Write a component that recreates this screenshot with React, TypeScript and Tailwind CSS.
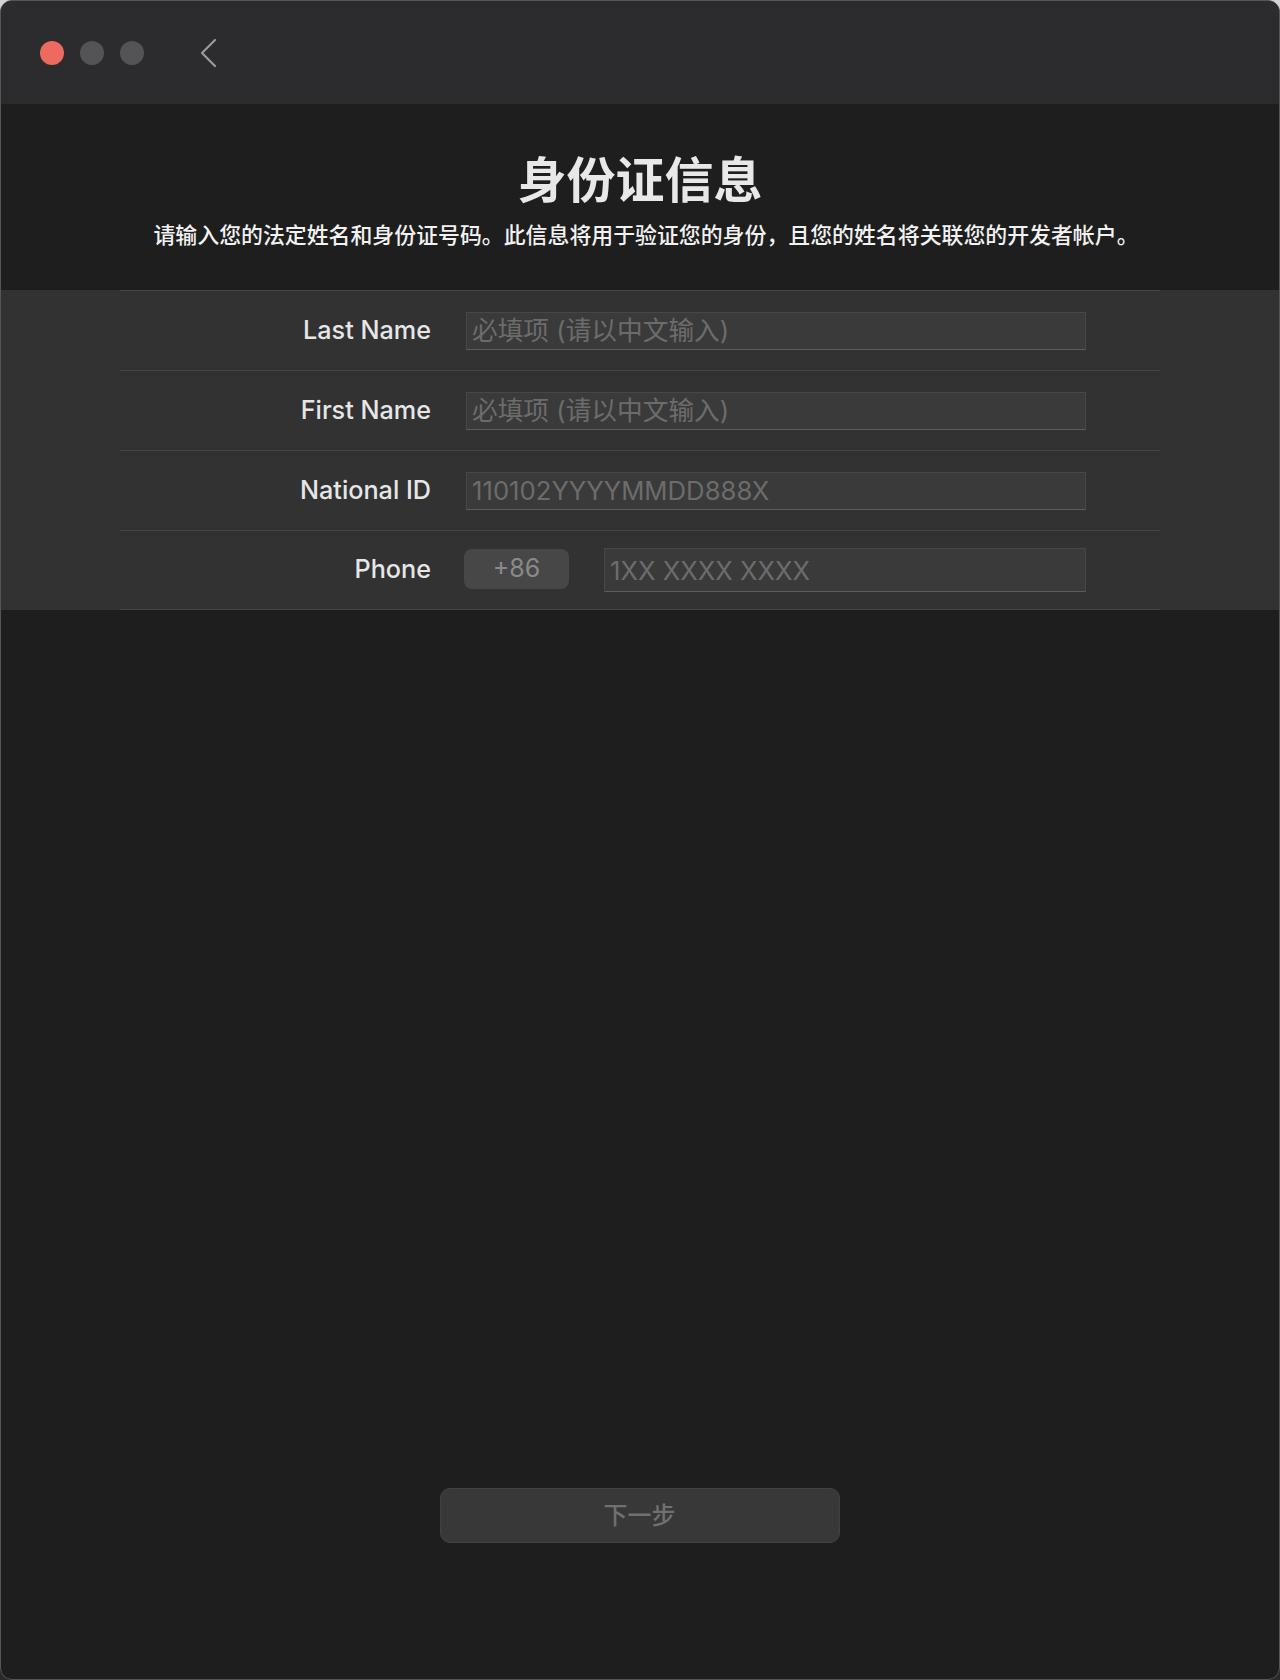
import React from "react";

const Row = ({ label, children, last }: { label: string; children: React.ReactNode; last?: boolean }) => (
  <div
    className={`flex items-center h-[80px] border-t border-[#464646] ${last ? "border-b" : ""}`}
  >
    <div className="w-[311px] text-right text-[25.2px] font-medium text-[#e6e6e6] font-['Inter','Noto_Sans_CJK_SC',sans-serif] leading-none">
      {label}
    </div>
    <div className="ml-[35px] flex items-center">{children}</div>
  </div>
);

const Field = ({ placeholder, w, h }: { placeholder: string; w: string; h: string }) => (
  <input
    readOnly
    placeholder={placeholder}
    className={`${w} ${h} bg-[#3a3a3a] border border-[#474747] border-b-[#5c5c5c] px-[5px] text-[25.7px] leading-none text-[#dcdcdc] placeholder:text-[#6c6c6c] font-['Inter','Noto_Sans_CJK_SC',sans-serif] outline-none`}
  />
);

export default function App() {
  return (
    <div className="w-[1280px] h-[1680px] bg-gradient-to-b from-[#d4d4d4] to-[#2a2a2a]">
      <div className="w-full h-full rounded-[12px] border border-[#565656] bg-[#1e1e1e] overflow-hidden flex flex-col">
        {/* title bar */}
        <div className="h-[103px] shrink-0 bg-[#2c2c2e] flex items-center pl-[39px]">
          <div className="flex items-center gap-[16px]">
            <div className="w-[24px] h-[24px] rounded-full bg-[#ec6a5e]" />
            <div className="w-[24px] h-[24px] rounded-full bg-[#545456]" />
            <div className="w-[24px] h-[24px] rounded-full bg-[#545456]" />
          </div>
          <svg className="ml-[55px]" width="20" height="30" viewBox="0 0 20 30" fill="none">
            <path d="M16 2 L3 15 L16 28" stroke="#9a9a9a" strokeWidth="2.2" strokeLinecap="round" strokeLinejoin="round" />
          </svg>
        </div>

        {/* header */}
        <div className="shrink-0 h-[186px] flex flex-col items-center pt-[48px]">
          <h1 className="text-[49px] leading-[49px] font-bold text-[#e8e8e8] font-['Noto_Sans_CJK_SC',sans-serif]">
            身份证信息
          </h1>
          <p className="mt-[18px] pl-[12px] text-[21.9px] leading-[30px] font-medium text-[#f2f2f2] font-['Noto_Sans_CJK_SC',sans-serif]">
            请输入您的法定姓名和身份证号码。此信息将用于验证您的身份，且您的姓名将关联您的开发者帐户。
          </p>
        </div>

        {/* form band */}
        <div className="shrink-0 bg-[#323232]">
          <div className="mx-[119px]">
            <Row label="Last Name">
              <Field placeholder="必填项 (请以中文输入)" w="w-[620px]" h="h-[38px]" />
            </Row>
            <Row label="First Name">
              <Field placeholder="必填项 (请以中文输入)" w="w-[620px]" h="h-[38px]" />
            </Row>
            <Row label="National ID">
              <Field placeholder="110102YYYYMMDD888X" w="w-[620px]" h="h-[38px]" />
            </Row>
            <Row label="Phone" last>
              <div className="-ml-[2px] -mt-[2px] w-[105px] h-[40px] rounded-[8px] bg-[#474747] flex items-center justify-center text-[25px] text-[#8a8a8a] font-['Inter',sans-serif]">
                +86
              </div>
              <div className="ml-[35px]">
                <Field placeholder="1XX XXXX XXXX" w="w-[482px]" h="h-[44px]" />
              </div>
            </Row>
          </div>
        </div>

        <div className="flex-1" />

        {/* button */}
        <div className="shrink-0 flex justify-center pb-[136px]">
          <button className="ml-[-1px] w-[400px] h-[55px] pb-[3px] rounded-[10px] bg-[#383838] border border-[#424242] text-[24px] font-medium text-[#707070] font-['Noto_Sans_CJK_SC',sans-serif]">
            下一步
          </button>
        </div>
      </div>
    </div>
  );
}
